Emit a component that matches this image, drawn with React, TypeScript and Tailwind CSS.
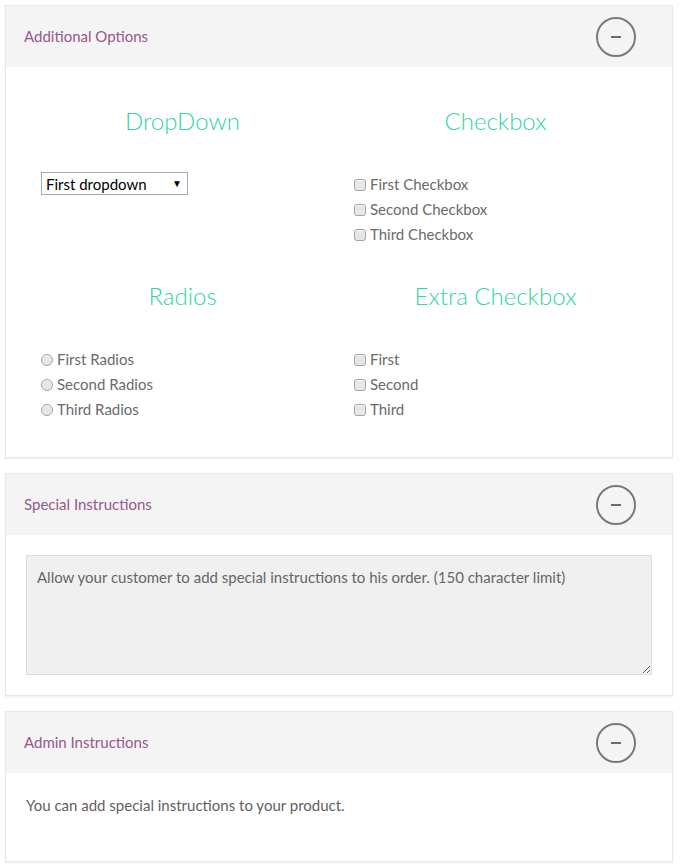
import { useState } from 'react'

// ── Small pieces ───────────────────────────────────────────────────────────

function Panel({ title, children }: { title: string; children: React.ReactNode }) {
  return (
    <section className="ml-[5px] mr-[7px] border border-[#e8e8e8] bg-white shadow-[0_1px_2px_rgba(0,0,0,0.08)]">
      <header className="flex h-[61px] items-center justify-between bg-[#f4f4f4] pl-[18px] pr-[36px]">
        <h3 className="text-[15px] text-[#96588a]">{title}</h3>
        <button className="flex h-[40px] w-[40px] items-center justify-center rounded-full border-2 border-[#7a7a7a]">
          <span className="block h-[2px] w-[10px] bg-[#6b6b6b]" />
        </button>
      </header>
      {children}
    </section>
  )
}

function Check({ label }: { label: string }) {
  return (
    <label className="flex h-[25px] items-center gap-[4px] text-[15px] text-[#6a6a6a]">
      <input
        type="checkbox"
        className="m-0 h-[12px] w-[12px] appearance-none rounded-[3px] border border-[#a3a3a3] bg-[#e6e6e6] shadow-[inset_0_1px_1px_rgba(255,255,255,0.8)]"
      />
      <span>{label}</span>
    </label>
  )
}

function Radio({ label, name }: { label: string; name: string }) {
  return (
    <label className="flex h-[25px] items-center gap-[4px] text-[15px] text-[#6a6a6a]">
      <input
        type="radio"
        name={name}
        className="m-0 h-[12px] w-[12px] appearance-none rounded-full border border-[#a3a3a3] bg-[#e6e6e6] shadow-[inset_0_1px_1px_rgba(255,255,255,0.8)]"
      />
      <span>{label}</span>
    </label>
  )
}

function ColTitle({ children }: { children: React.ReactNode }) {
  return <h2 className="mb-[36px] text-center text-[24px] font-light leading-[30px] text-[#2fd6a1]">{children}</h2>
}

// ── Page ───────────────────────────────────────────────────────────────────

export default function App() {
  const [choice, setChoice] = useState('first')

  return (
    <div className="flex min-h-[867px] flex-col gap-[15px] bg-white pt-[5px] font-['Lato','Open_Sans',sans-serif]">
      <Panel title="Additional Options">
        <div className="grid grid-cols-2 px-[20px] pt-[39px] pb-[35px]">
          <div className="px-[15px]">
            <ColTitle>DropDown</ColTitle>
            <div className="relative w-[147px]">
              <select
                value={choice}
                onChange={e => setChoice(e.target.value)}
                className="block h-[23px] w-full appearance-none rounded-none border border-[#a9a9a9] bg-white pl-[4px] text-[15px] leading-[20px] text-black outline-none"
              >
                <option value="first">First dropdown</option>
                <option value="second">Second dropdown</option>
              </select>
              <span className="pointer-events-none absolute right-[6px] top-[4px] text-[10px] leading-[14px] text-black">▼</span>
            </div>
          </div>
          <div className="px-[15px]">
            <ColTitle>Checkbox</ColTitle>
            <div className="flex flex-col">
              <Check label="First Checkbox" />
              <Check label="Second Checkbox" />
              <Check label="Third Checkbox" />
            </div>
          </div>

          <div className="px-[15px] pt-[34px]">
            <ColTitle>Radios</ColTitle>
            <div className="flex flex-col">
              <Radio name="radios" label="First Radios" />
              <Radio name="radios" label="Second Radios" />
              <Radio name="radios" label="Third Radios" />
            </div>
          </div>
          <div className="px-[15px] pt-[34px]">
            <ColTitle>Extra Checkbox</ColTitle>
            <div className="flex flex-col">
              <Check label="First" />
              <Check label="Second" />
              <Check label="Third" />
            </div>
          </div>
        </div>
      </Panel>

      <Panel title="Special Instructions">
        <div className="px-[20px] pt-[20px] pb-[20px]">
          <textarea
            placeholder="Allow your customer to add special instructions to his order. (150 character limit)"
            className="block h-[120px] w-full resize-y border border-[#dcdcdc] bg-[#f0f0f0] px-[10px] pt-[10px] pb-[10px] text-[15px] text-[#666] outline-none placeholder:text-[#666]"
          />
        </div>
      </Panel>

      <Panel title="Admin Instructions">
        <p className="px-[20px] pt-[21px] pb-[44px] text-[15px] text-[#5f5f5f]">You can add special instructions to your product.</p>
      </Panel>
    </div>
  )
}
